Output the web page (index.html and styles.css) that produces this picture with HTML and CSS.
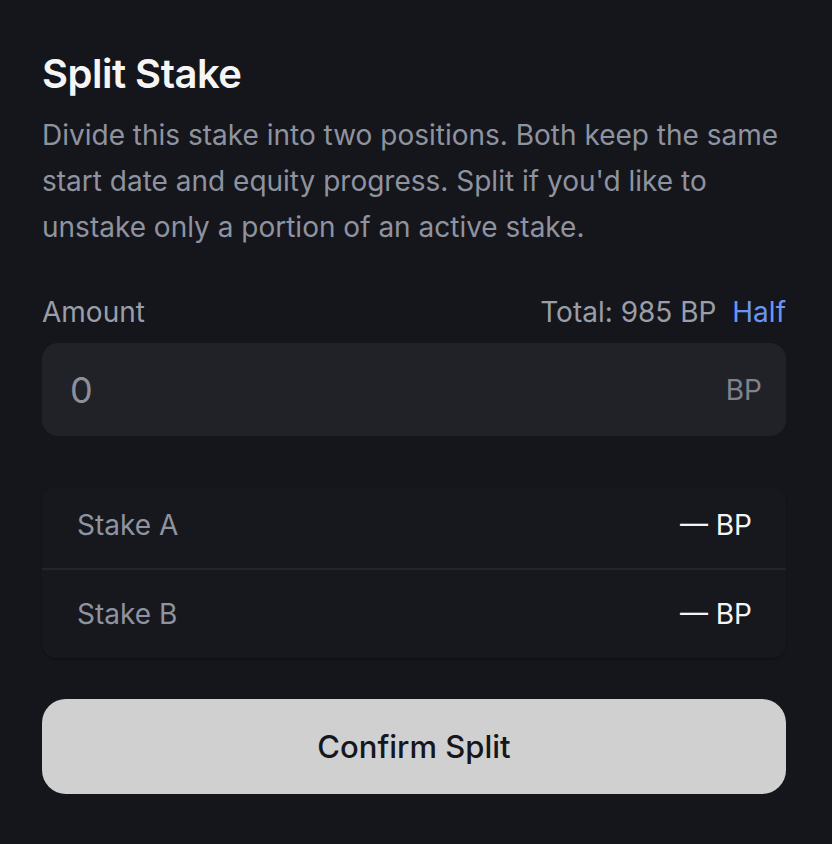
FILE: index.html
```html
<!DOCTYPE html>
<html>
<head>
<meta charset="utf-8">
<link rel="stylesheet" href="styles.css">
</head>
<body>
<div class="panel">
  <h1 class="title">Split Stake</h1>
  <p class="desc">Divide this stake into two positions. Both keep the same start date and equity progress. Split if you'd like to unstake only a portion of an active stake.</p>
  <div class="label-row">
    <span class="label">Amount</span>
    <span class="total">Total: 985 BP <span class="half">Half</span></span>
  </div>
  <div class="input">
    <span class="input-value">0</span>
    <span class="input-unit">BP</span>
  </div>
  <div class="stakes">
    <div class="stake-row">
      <span class="stake-name">Stake A</span>
      <span class="stake-value">— BP</span>
    </div>
    <div class="stake-row">
      <span class="stake-name">Stake B</span>
      <span class="stake-value">— BP</span>
    </div>
  </div>
  <button class="confirm">Confirm Split</button>
</div>
</body>
</html>
```
FILE: styles.css
```css
html, body {
  margin: 0;
  padding: 0;
  background: #15161b;
}
body {
  font-family: Inter, "Noto Sans", sans-serif;
  color: #f4f4f5;
}
.panel {
  padding: 48px 46px 0 42px;
  display: flex;
  flex-direction: column;
}
.title {
  margin: 0;
  font-size: 40px;
  font-weight: 600;
  line-height: 52px;
  color: #f5f5f6;
  letter-spacing: -0.5px;
}
.desc {
  margin: 12px 0 0;
  font-size: 28px;
  line-height: 46px;
  color: #8f93a0;
}
.label-row {
  margin-top: 44px;
  display: flex;
  justify-content: space-between;
  align-items: center;
  font-size: 28px;
  line-height: 36px;
  color: #9a9ea9;
}
.half {
  color: #6b95f5;
  margin-left: 8px;
}
.input {
  margin-top: 13px;
  height: 93px;
  border-radius: 16px;
  background: #212227;
  display: flex;
  align-items: center;
  justify-content: space-between;
  padding: 0 24px 0 28px;
}
.input-value {
  font-size: 36px;
  color: #8c909b;
}
.input-unit {
  font-size: 28px;
  color: #80838e;
}
.stakes {
  margin-top: 51px;
  background: #17181d;
  border-radius: 14px;
  box-shadow: 0 1px 2px rgba(0,0,0,0.35);
  display: flex;
  flex-direction: column;
}
.stake-row {
  height: 81px;
  box-sizing: border-box;
  display: flex;
  align-items: center;
  justify-content: space-between;
  padding: 0 34px 6px 35px;
  font-size: 28px;
}
.stake-row + .stake-row {
  border-top: 2px solid #24252a;
  height: 90px;
  padding-bottom: 0;
}
.stake-name {
  color: #8f93a0;
}
.stake-value {
  color: #f4f4f5;
  font-weight: 400;
}
.confirm {
  margin-top: 41px;
  height: 95px;
  border: none;
  border-radius: 24px;
  background: #d0d0d0;
  color: #16171c;
  font-family: Inter, "Noto Sans", sans-serif;
  font-size: 31px;
  font-weight: 500;
  width: 100%;
}
```
